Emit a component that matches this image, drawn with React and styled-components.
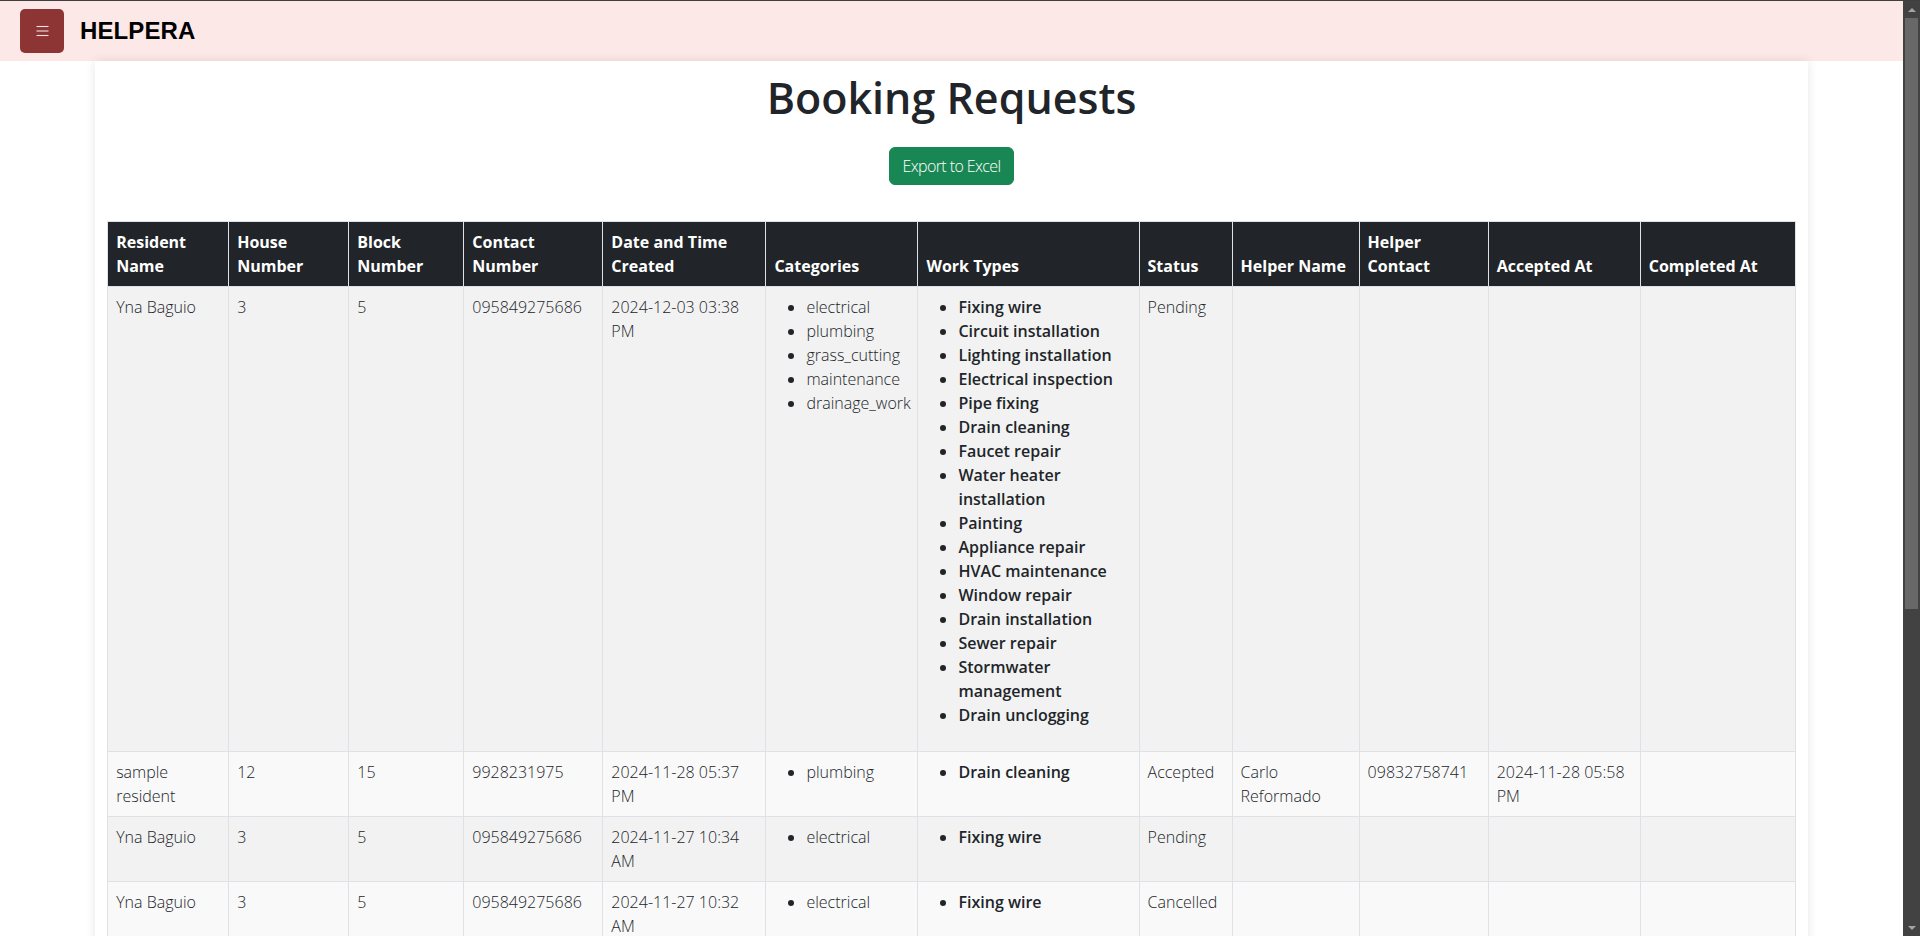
import styled, { createGlobalStyle } from "styled-components";

const GlobalStyle = createGlobalStyle`
  html, body {
    margin: 0;
    padding: 0;
    height: 100%;
    overflow: hidden;
    background: #ffffff;
  }

  body {
    font-family: "Open Sans", "Noto Sans", "Liberation Sans", sans-serif;
    font-size: 16px;
    line-height: 1.5;
    color: #212529;
  }

  *, *::before, *::after {
    box-sizing: border-box;
  }
`;

const Shell = styled.div`
  display: flex;
  height: 100vh;
  border-top: 1px solid #3f3f3f;
`;

const Viewport = styled.div`
  flex: 1;
  min-width: 0;
  overflow: hidden;
`;

const ScrollTrack = styled.div`
  display: flex;
  flex-direction: column;
  width: 17px;
  flex-shrink: 0;
  background: #424242;
`;

const ScrollArrow = styled.div`
  display: flex;
  align-items: center;
  justify-content: center;
  height: 17px;

  &::before {
    content: "";
    width: 0;
    height: 0;
    border-left: 4px solid transparent;
    border-right: 4px solid transparent;
    ${(p) =>
      p.$down
        ? "border-top: 4px solid #a3a3a3;"
        : "border-bottom: 4px solid #a3a3a3;"}
  }
`;

const ScrollThumb = styled.div`
  height: 591px;
  margin: 0 2px;
  background: #686868;
`;

const ScrollSpacer = styled.div`
  flex: 1;
`;

const NavBar = styled.header`
  display: flex;
  align-items: center;
  gap: 16px;
  height: 60px;
  padding: 0 20px;
  background: #fde8e8;
`;

const MenuButton = styled.button`
  display: flex;
  align-items: center;
  justify-content: center;
  width: 44px;
  height: 44px;
  padding: 0;
  border: none;
  border-radius: 5px;
  background: #8d3434;
  cursor: pointer;
`;

const Brand = styled.span`
  font-family: "Liberation Sans", Arial, sans-serif;
  font-size: 24px;
  font-weight: 700;
  letter-spacing: 0.1px;
  color: #000000;
`;

const Container = styled.main`
  width: 90%;
  min-height: 1370px;
  margin: 0 auto;
  padding: 10px 12px 24px;
  background: #ffffff;
  box-shadow: 0 0 10px rgba(0, 0, 0, 0.1);
`;

const Title = styled.h1`
  margin: 0 0 23px;
  font-size: 43px;
  font-weight: 550;
  line-height: 53px;
  text-align: center;
  color: #212529;
`;

const Actions = styled.div`
  display: flex;
  justify-content: center;
  margin-bottom: 36px;
`;

const ExportButton = styled.button`
  padding: 6px 12px;
  border: 1px solid #198754;
  border-radius: 6px;
  background: #198754;
  color: #ffffff;
  font-family: inherit;
  font-size: 16px;
  font-weight: 300;
  letter-spacing: -0.6px;
  line-height: 1.5;
  cursor: pointer;
`;

const Table = styled.table`
  width: 100%;
  table-layout: fixed;
  border-collapse: collapse;
`;

const HeadCell = styled.th`
  padding: 8px;
  border: 1px solid #dee2e6;
  background: #212529;
  color: #ffffff;
  font-weight: 700;
  text-align: left;
  vertical-align: bottom;
`;

const Row = styled.tr`
  background: ${(p) => (p.$odd ? "#f2f2f2" : "#f9f9f9")};
`;

const Cell = styled.td`
  padding: 8px;
  border: 1px solid #dee2e6;
  vertical-align: top;
  font-weight: 300;
`;

const List = styled.ul`
  margin: 0 0 16px;
  padding-left: 32px;
`;

const WorkItem = styled.li`
  font-weight: 600;
`;

const MenuIcon = () => (
  <svg width="13" height="12" viewBox="0 0 13 12">
    <g stroke="#f5e1e1" strokeWidth="1.1">
      <line x1="0.5" y1="1.5" x2="12.5" y2="1.5" />
      <line x1="0.5" y1="6" x2="12.5" y2="6" />
      <line x1="0.5" y1="10.5" x2="12.5" y2="10.5" />
    </g>
  </svg>
);

const columns = [
  { label: "Resident Name", width: 121 },
  { label: "House Number", width: 120 },
  { label: "Block Number", width: 115 },
  { label: "Contact Number", width: 139 },
  { label: "Date and Time Created", width: 163 },
  { label: "Categories", width: 152 },
  { label: "Work Types", width: 221 },
  { label: "Status", width: 93 },
  { label: "Helper Name", width: 127 },
  { label: "Helper Contact", width: 129 },
  { label: "Accepted At", width: 152 },
  { label: "Completed At", width: 155 },
];

const bookings = [
  {
    resident: "Yna Baguio",
    house: "3",
    block: "5",
    contact: "095849275686",
    created: "2024-12-03 03:38 PM",
    categories: ["electrical", "plumbing", "grass_cutting", "maintenance", "drainage_work"],
    workTypes: [
      "Fixing wire",
      "Circuit installation",
      "Lighting installation",
      "Electrical inspection",
      "Pipe fixing",
      "Drain cleaning",
      "Faucet repair",
      "Water heater installation",
      "Painting",
      "Appliance repair",
      "HVAC maintenance",
      "Window repair",
      "Drain installation",
      "Sewer repair",
      "Stormwater management",
      "Drain unclogging",
    ],
    status: "Pending",
    helper: "",
    helperContact: "",
    accepted: "",
    completed: "",
  },
  {
    resident: "sample resident",
    house: "12",
    block: "15",
    contact: "9928231975",
    created: "2024-11-28 05:37 PM",
    categories: ["plumbing"],
    workTypes: ["Drain cleaning"],
    status: "Accepted",
    helper: "Carlo Reformado",
    helperContact: "09832758741",
    accepted: "2024-11-28 05:58 PM",
    completed: "",
  },
  {
    resident: "Yna Baguio",
    house: "3",
    block: "5",
    contact: "095849275686",
    created: "2024-11-27 10:34 AM",
    categories: ["electrical"],
    workTypes: ["Fixing wire"],
    status: "Pending",
    helper: "",
    helperContact: "",
    accepted: "",
    completed: "",
  },
  {
    resident: "Yna Baguio",
    house: "3",
    block: "5",
    contact: "095849275686",
    created: "2024-11-27 10:32 AM",
    categories: ["electrical"],
    workTypes: ["Fixing wire"],
    status: "Cancelled",
    helper: "",
    helperContact: "",
    accepted: "",
    completed: "",
  },
];

const App = () => {
  return (
    <>
      <GlobalStyle />
      <Shell>
        <Viewport>
          <NavBar>
            <MenuButton aria-label="Menu">
              <MenuIcon />
            </MenuButton>
            <Brand>HELPERA</Brand>
          </NavBar>

          <Container>
            <Title>Booking Requests</Title>
            <Actions>
              <ExportButton>Export to Excel</ExportButton>
            </Actions>

            <Table>
              <colgroup>
                {columns.map((c) => (
                  <col key={c.label} style={{ width: c.width }} />
                ))}
              </colgroup>
              <thead>
                <tr>
                  {columns.map((c) => (
                    <HeadCell key={c.label}>{c.label}</HeadCell>
                  ))}
                </tr>
              </thead>
              <tbody>
                {bookings.map((b, i) => (
                  <Row key={i} $odd={i % 2 === 0}>
                    <Cell>{b.resident}</Cell>
                    <Cell>{b.house}</Cell>
                    <Cell>{b.block}</Cell>
                    <Cell>{b.contact}</Cell>
                    <Cell>{b.created}</Cell>
                    <Cell>
                      <List>
                        {b.categories.map((c) => (
                          <li key={c}>{c}</li>
                        ))}
                      </List>
                    </Cell>
                    <Cell>
                      <List>
                        {b.workTypes.map((w) => (
                          <WorkItem key={w}>{w}</WorkItem>
                        ))}
                      </List>
                    </Cell>
                    <Cell>{b.status}</Cell>
                    <Cell>{b.helper}</Cell>
                    <Cell>{b.helperContact}</Cell>
                    <Cell>{b.accepted}</Cell>
                    <Cell>{b.completed}</Cell>
                  </Row>
                ))}
              </tbody>
            </Table>
          </Container>
        </Viewport>

        <ScrollTrack aria-hidden="true">
          <ScrollArrow />
          <ScrollThumb />
          <ScrollSpacer />
          <ScrollArrow $down />
        </ScrollTrack>
      </Shell>
    </>
  );
};

export default App;
